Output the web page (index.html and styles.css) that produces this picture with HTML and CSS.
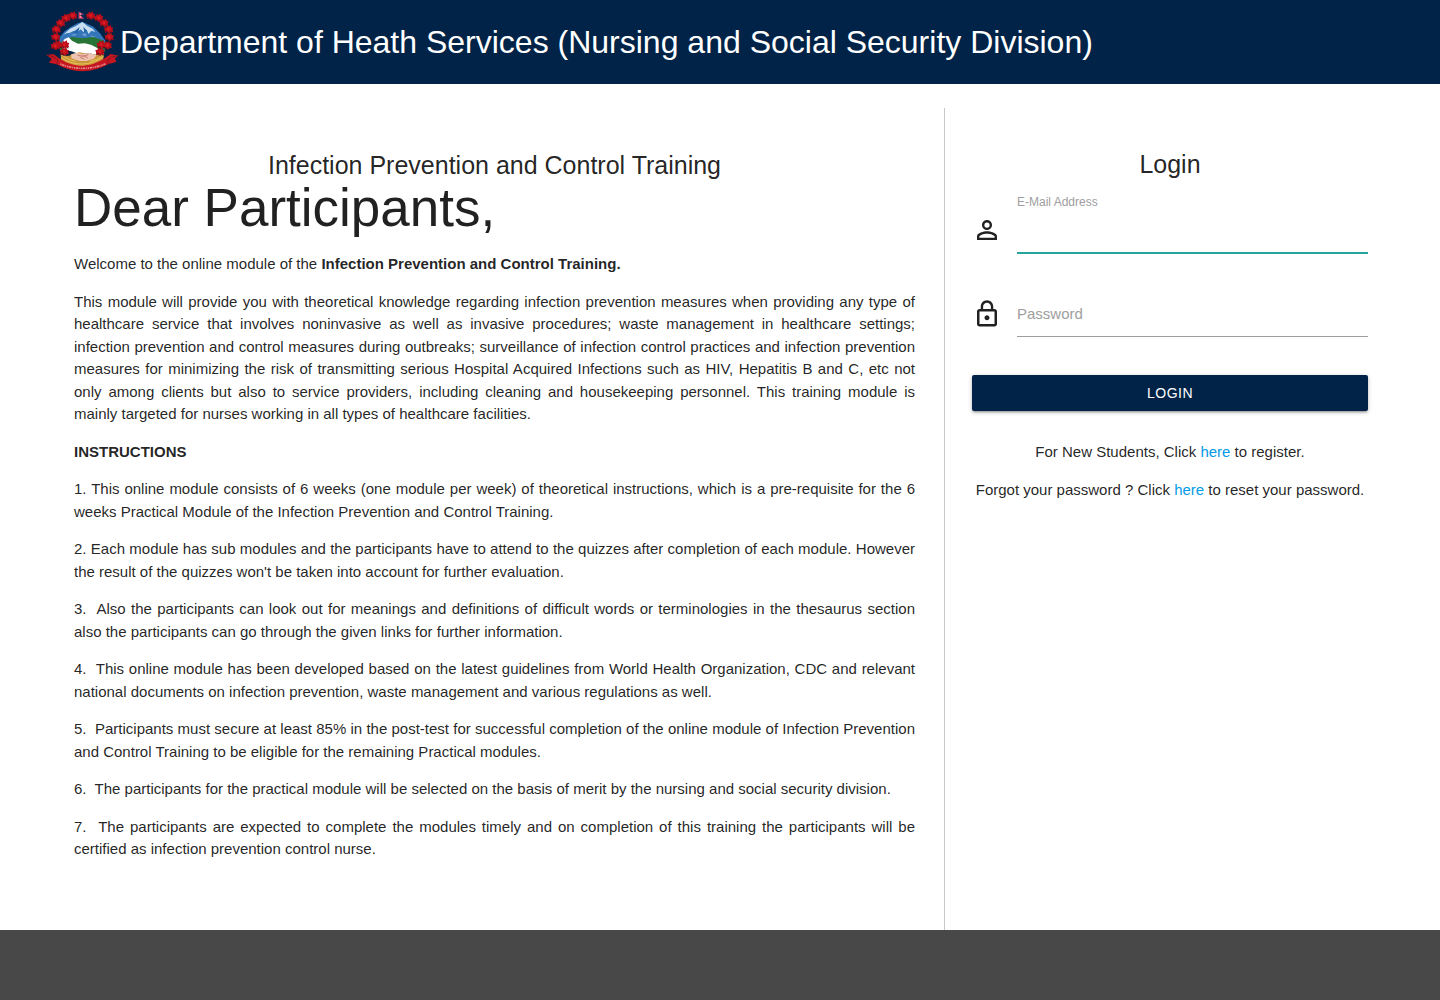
FILE: index.html
```html
<!DOCTYPE html>
<html lang="en">
<head>
<meta charset="utf-8">
<meta name="viewport" content="width=device-width, initial-scale=1">
<title>Infection Prevention and Control Training</title>
<link rel="stylesheet" href="styles.css">
</head>
<body>
<header class="navbar">
  <svg class="emblem" viewBox="15 18 225 192" role="img" aria-label="Emblem of Nepal">
    <defs>
      <g id="bloom">
        <path d="M-12 2L-14-5L-7-6L-6-12L0-9L6-13L8-6L14-5L11 2L14 8L6 8L2 13L-3 8L-11 10Z" fill="#b80f1a"/>
        <path d="M-5-3L0-6L5-1L2 5L-4 3Z" fill="#dc1a24"/>
        <path d="M-11 8L-5 6L-2 12M6 8L11 10" fill="none" stroke="#5a1020" stroke-width="3"/>
      </g>
    </defs>
    <path d="M56 110L60 98L74 82L91 70L112 58L127 53L142 60L160 68L180 88L196 110L192 132L60 124Z" fill="#3474b8"/>
    <path d="M70 92L90 74L108 66L127 54L142 66L158 74L166 84L154 80L146 90L140 78L130 84L122 76L110 86L102 80L90 86L80 88Z" fill="#c9def0"/>
    <path d="M103 82L119 69L114 86L100 98ZM130 68L141 80L134 90Z" fill="#2463a9"/>
    <path d="M92 92L112 88L104 96ZM124 92L136 86L140 98ZM150 94L166 98L160 104Z" fill="#6c9fd2"/>
    <path d="M60 116L95 99L128 103L160 99L192 110L196 142L174 156L112 138L60 138Z" fill="#287336"/>
    <path d="M62 121L74 105L86 100L96 110L114 119L134 118L153 122L172 132L180 145L170 153L148 148L119 151L94 142L72 137Z" fill="#fff"/>
    <path d="M62 151Q88 161 94 151L119 145L153 152L192 150L187 183Q126 205 64 180Z" fill="#c9953b"/>
    <path d="M94 151L112 146L128 150L148 147L170 154L160 165L139 171L119 171L94 163Z" fill="#efc3b1"/>
    <path d="M112 153L129 157L145 152M119 159L134 166M127 153L144 162" fill="none" stroke="#c87a70" stroke-width="3"/>
    <path d="M63 161Q92 181 126 180Q160 180 191 158M64 169Q92 186 126 186Q162 184 189 168M70 157Q92 171 108 172M150 172Q174 167 185 158" fill="none" stroke="#e8c457" stroke-width="3"/>
    <path d="M20 153L40 150L60 164Q90 184 127 185Q162 184 194 163L212 150L235 155L225 163L229 174L206 180Q170 201 127 202Q84 201 50 181L27 176L35 165Z" fill="#c61621"/>
    <path d="M20 153L40 158L54 169L50 181M235 155L214 160L202 169L206 180" fill="none" stroke="#851620" stroke-width="3"/>
    <path d="M61 180Q126 206 196 180" fill="none" stroke="#e58f90" stroke-width="5" stroke-dasharray="4 2 7 2 3 3"/>
    <use href="#bloom" x="98" y="35"/><use href="#bloom" x="78" y="42"/>
    <use href="#bloom" x="62" y="57"/><use href="#bloom" x="49" y="76"/>
    <use href="#bloom" x="47" y="99"/><use href="#bloom" x="53" y="122"/>
    <use href="#bloom" x="73" y="143"/><use href="#bloom" x="46" y="126"/>
    <use href="#bloom" x="74" y="122"/>
    <use href="#bloom" x="152" y="35"/><use href="#bloom" x="176" y="42"/>
    <use href="#bloom" x="192" y="57"/><use href="#bloom" x="206" y="76"/>
    <use href="#bloom" x="208" y="99"/><use href="#bloom" x="202" y="124"/>
    <use href="#bloom" x="180" y="143"/><use href="#bloom" x="184" y="122"/>
    <path d="M116 23L131 31L121 33L132 44H116Z" fill="#e32346" stroke="#6877b8" stroke-width="1"/>
    <path d="M119 30H123M119 39H124" stroke="#fff" stroke-width="3"/>
  </svg>
  <span class="brand">Department of Heath Services (Nursing and Social Security Division)</span>
</header>
<main class="content">
  <article class="intro">
    <h2 class="section-title">Infection Prevention and Control Training</h2>
    <h1 class="greeting">Dear Participants,</h1>
    <p>Welcome to the online module of the <b>Infection Prevention and Control Training.</b></p>
    <p>This module will provide you with theoretical knowledge regarding infection prevention measures when providing any type of healthcare service that involves noninvasive as well as invasive procedures; waste management in healthcare settings; infection prevention and control measures during outbreaks; surveillance of infection control practices and infection prevention measures for minimizing the risk of transmitting serious Hospital Acquired Infections such as HIV, Hepatitis B and C, etc not only among clients but also to service providers, including cleaning and housekeeping personnel. This training module is mainly targeted for nurses working in all types of healthcare facilities.</p>
    <p><b>INSTRUCTIONS</b></p>
    <p>1. This online module consists of 6 weeks (one module per week) of theoretical instructions, which is a pre-requisite for the 6 weeks Practical Module of the Infection Prevention and Control Training.</p>
    <p>2. Each module has sub modules and the participants have to attend to the quizzes after completion of each module. However the result of the quizzes won't be taken into account for further evaluation.</p>
    <p>3.&nbsp; Also the participants can look out for meanings and definitions of difficult words or terminologies in the thesaurus section also the participants can go through the given links for further information.</p>
    <p>4.&nbsp; This online module has been developed based on the latest guidelines from World Health Organization, CDC and relevant national documents on infection prevention, waste management and various regulations as well.</p>
    <p>5.&nbsp; Participants must secure at least 85% in the post-test for successful completion of the online module of Infection Prevention and Control Training to be eligible for the remaining Practical modules.</p>
    <p>6.&nbsp; The participants for the practical module will be selected on the basis of merit by the nursing and social security division.</p>
    <p>7.&nbsp; The participants are expected to complete the modules timely and on completion of this training the participants will be certified as infection prevention control nurse.</p>
  </article>
  <section class="login">
    <h2 class="section-title">Login</h2>
    <form class="login-form">
      <div class="field field-active">
        <svg class="field-icon" viewBox="0 0 24 24" aria-hidden="true"><path d="M12 5.900a2.100 2.100 0 1 1 0 4.200 2.100 2.100 0 0 1 0-4.200m0 9c2.970 0 6.100 1.460 6.100 2.100v1.100H5.900V17c0-.64 3.130-2.100 6.100-2.100M12 4C9.790 4 8 5.790 8 8s1.790 4 4 4 4-1.790 4-4-1.790-4-4-4zm0 9c-2.670 0-8 1.340-8 4v3h16v-3c0-2.660-5.330-4-8-4z"/></svg>
        <div class="control">
          <label for="email">E-Mail Address</label>
          <input id="email" name="email" type="email" autocomplete="off">
        </div>
      </div>
      <div class="field">
        <svg class="field-icon" viewBox="0 0 24 24" aria-hidden="true"><path d="M12 17c1.100 0 2-.9 2-2s-.9-2-2-2-2 .9-2 2 .9 2 2 2zm6-9h-1V6c0-2.760-2.240-5-5-5S7 3.240 7 6v2H6c-1.100 0-2 .9-2 2v10c0 1.100.9 2 2 2h12c1.100 0 2-.9 2-2V10c0-1.100-.9-2-2-2zM8.900 6c0-1.710 1.390-3.100 3.100-3.100s3.100 1.390 3.100 3.100v2H8.900V6zM18 20H6V10h12v10z"/></svg>
        <div class="control">
          <label for="password">Password</label>
          <input id="password" name="password" type="password" autocomplete="off">
        </div>
      </div>
      <button class="submit" type="submit">LOGIN</button>
    </form>
    <p>For New Students, Click <a href="#register">here</a> to register.</p>
    <p>Forgot your password ? Click <a href="#reset">here</a> to reset your password.</p>
  </section>
</main>
<footer class="footer"></footer>
</body>
</html>
```
FILE: styles.css
```css
* {
  box-sizing: border-box;
}

body {
  display: flex;
  flex-direction: column;
  min-height: 100vh;
  margin: 0;
  background: #fff;
  color: rgba(0, 0, 0, 0.87);
  font: 15px/1.5 "Liberation Sans", Arial, sans-serif;
}

.navbar {
  display: flex;
  align-items: center;
  padding: 10px 45px;
  background: #002347;
  color: #fff;
}

.emblem {
  flex: none;
  width: 75px;
  height: 64px;
}

.brand {
  font-size: 32px;
  line-height: 48px;
}

.content {
  display: grid;
  flex: 1;
  grid-template-columns: 2fr 1fr;
  padding: 24px 45px 0;
}

.intro {
  padding: 43px 29px 69px;
  border-right: 1px solid #c9c9c9;
  text-align: justify;
}

.section-title {
  margin: 0;
  font-size: 25px;
  font-weight: 400;
  line-height: 28px;
  text-align: center;
}

.greeting {
  margin: 0 0 16px;
  font-size: 53px;
  font-weight: 400;
  line-height: 58px;
  text-align: left;
}

p {
  margin: 0 0 15px;
}

.intro p:last-child {
  margin-bottom: 0;
}

.login {
  padding: 42px 27px;
  text-align: center;
}

.login-form {
  display: flex;
  flex-direction: column;
  gap: 38px;
  margin: 30px 0;
}

.field {
  display: flex;
  align-items: flex-start;
  gap: 15px;
}

.field-icon {
  flex: none;
  width: 30px;
  height: 30px;
  margin-top: 7px;
  fill: currentColor;
}

.control {
  position: relative;
  flex: 1;
  text-align: left;
}

.control label {
  position: absolute;
  top: 11px;
  left: 0;
  color: #9e9e9e;
  cursor: text;
}

.field-active label {
  top: -14px;
  font-size: 12px;
  line-height: 16px;
}

.control input {
  display: block;
  width: 100%;
  height: 45px;
  padding: 0;
  border: 0;
  border-bottom: 1px solid #9e9e9e;
  outline: 0;
  background: transparent;
  font: inherit;
}

.field-active input,
.control input:focus {
  height: 46px;
  border-bottom: 2px solid #26a69a;
}

.submit {
  height: 36px;
  padding: 0 16px;
  border: 0;
  border-radius: 2px;
  background: #002347;
  box-shadow: 0 2px 2px rgba(0, 0, 0, 0.14), 0 3px 1px -2px rgba(0, 0, 0, 0.12), 0 1px 5px rgba(0, 0, 0, 0.2);
  color: #fff;
  font: 14px/36px "Liberation Sans", Arial, sans-serif;
  letter-spacing: 0.5px;
  cursor: pointer;
}

a {
  color: #039be5;
  text-decoration: none;
}

.footer {
  min-height: 70px;
  background: #484848;
}

@media (max-width: 900px) {
  .content {
    grid-template-columns: 1fr;
  }

  .intro {
    border-right: 0;
  }
}
```
